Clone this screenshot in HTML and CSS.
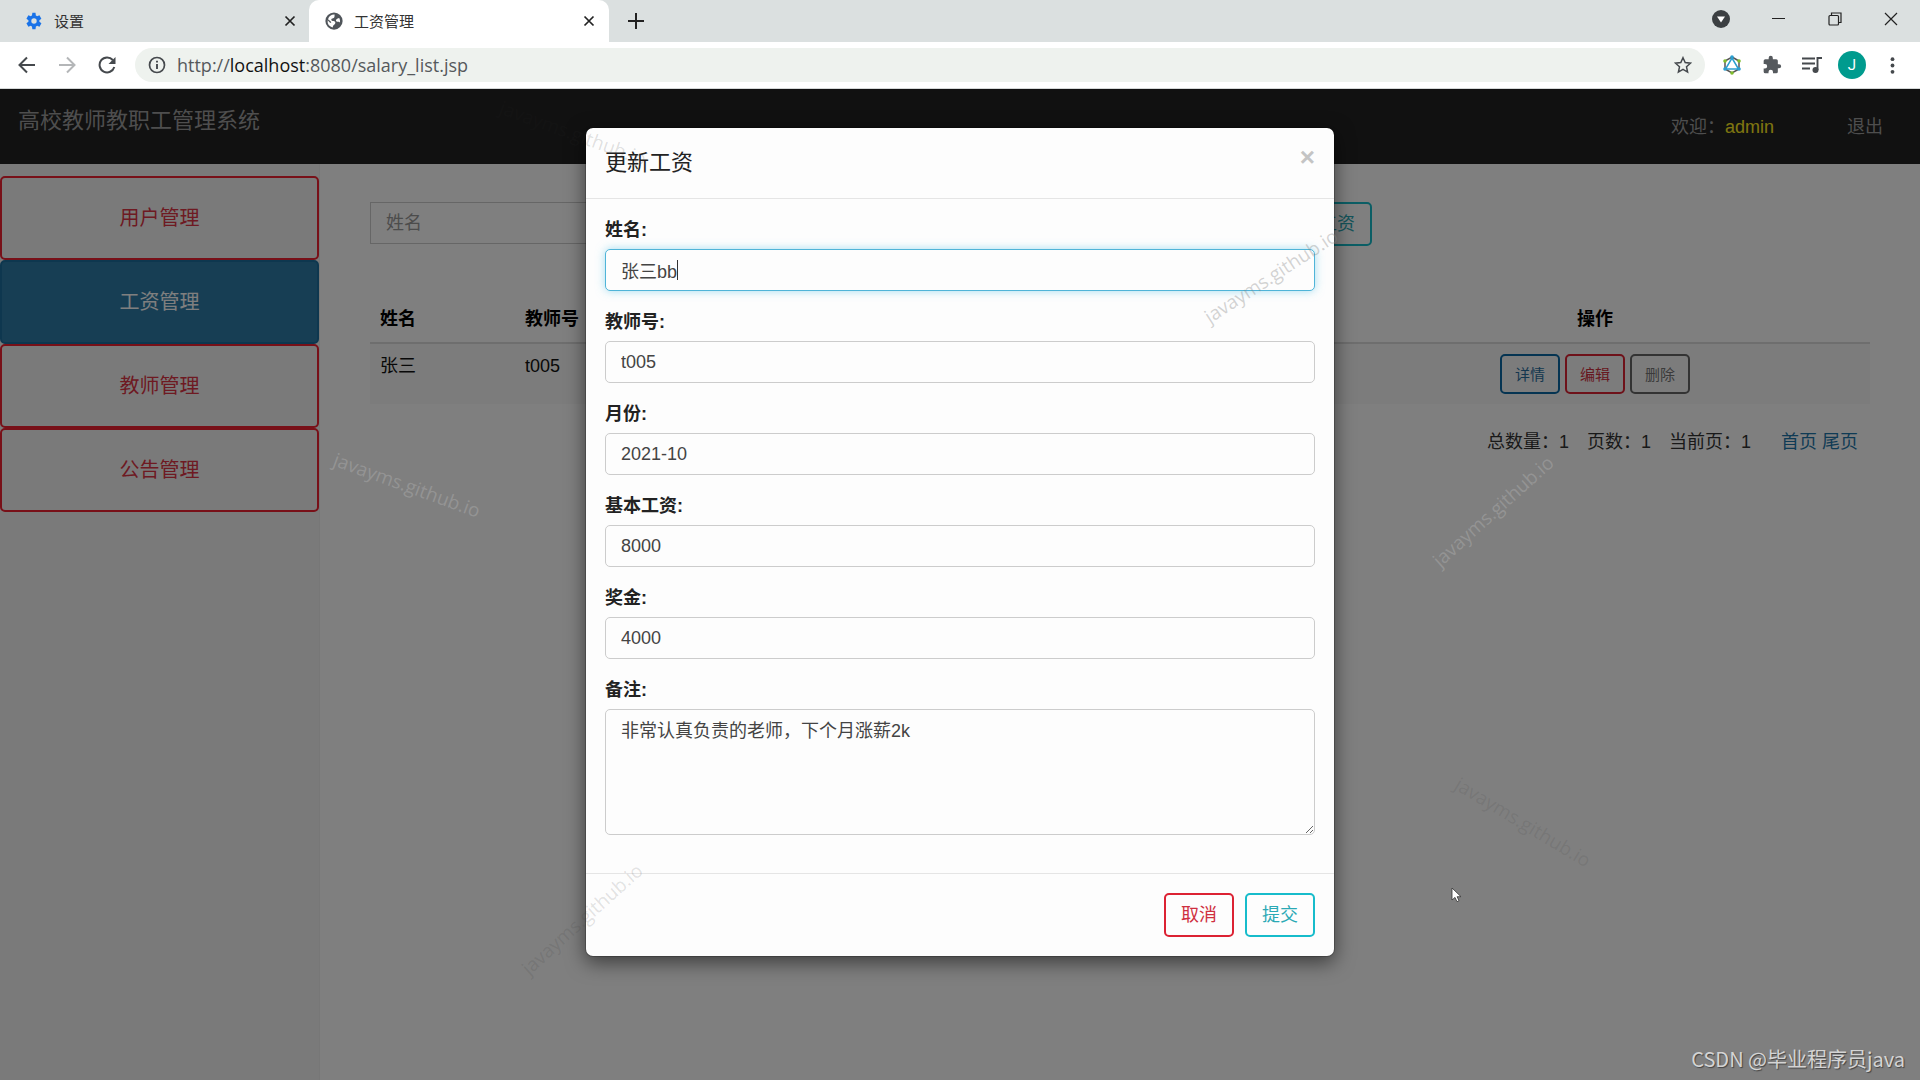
FILE: index.html
```html
<!DOCTYPE html>
<html lang="zh-CN">
<head>
<meta charset="utf-8">
<title>工资管理</title>
<link rel="stylesheet" href="styles.css">
</head>
<body>
<div class="browser">
  <header class="tabstrip">
    <div class="tab">
      <svg class="tab-icon" viewBox="0 0 24 24" fill="#1a73e8"><path d="M19.14 12.94a7.5 7.5 0 0 0 0-1.88l2.7-2.1-2.6-4.5-3.2 1.3a7 7 0 0 0-1.6-.94L14 1H9.800l-.5 3.800a7 7 0 0 0-1.600.94l-3.200-1.300-2.600 4.500 2.700 2.100a7.500 7.500 0 0 0 0 1.900l-2.700 2.100 2.600 4.500 3.200-1.300a7 7 0 0 0 1.600.94l.5 3.800H14l.5-3.800a7 7 0 0 0 1.600-.94l3.200 1.300 2.600-4.500zM12 15.600A3.600 3.600 0 1 1 12 8.400a3.600 3.600 0 0 1 0 7.200z"/></svg>
      <span class="tab-title">设置</span>
      <button class="tab-close" aria-label="关闭"><svg viewBox="0 0 12 12"><path d="M1.500 1.500l9 9m0-9l-9 9" stroke="#222" stroke-width="1.700"/></svg></button>
    </div>
    <div class="tab tab-active">
      <svg class="tab-icon" viewBox="0 0 24 24"><circle cx="12" cy="12" r="11.500" fill="#50555a"/><path d="M13 3.500c-1 2 .5 2.500-1 4S8 8 8.500 10.500s4 .500 5 2.500-.500 3.500-2 4.500-.500 2.500-1.500 3A9 9 0 0 1 3.500 11L7 14.500l1.500-1L7 12l-3-2.500A9 9 0 0 1 13 3.500zM15 10c1.500-.500 2-2 4-2a9 9 0 0 1 1 6c-1.500-1-2-1-3.500-1S14 11 15 10z" fill="#fff"/></svg>
      <span class="tab-title">工资管理</span>
      <button class="tab-close" aria-label="关闭"><svg viewBox="0 0 12 12"><path d="M1.500 1.500l9 9m0-9l-9 9" stroke="#222" stroke-width="1.700"/></svg></button>
    </div>
    <button class="new-tab" aria-label="新标签页"><svg viewBox="0 0 16 16"><path d="M8 0v16M0 8h16" stroke="#222" stroke-width="2"/></svg></button>
    <div class="window-controls">
      <button aria-label="搜索标签页"><svg width="18" height="18" viewBox="0 0 18 18"><circle cx="9" cy="9" r="9" fill="#3c4043"/><path d="M5 6.500h8L9 12.500z" fill="#fff"/></svg></button>
      <button aria-label="最小化"><svg width="14" height="14" viewBox="0 0 14 14"><path d="M0 6.500h13" stroke="#222"/></svg></button>
      <button aria-label="还原"><svg width="14" height="14" viewBox="0 0 14 14" fill="none" stroke="#222" stroke-width="1.200"><rect x="1" y="3.500" width="9.500" height="9.500" rx="1"/><path d="M3.500 3.500V1H13v9.500h-2.500"/></svg></button>
      <button aria-label="关闭窗口"><svg width="14" height="14" viewBox="0 0 14 14"><path d="M1 1l12 12m0-12L1 13" stroke="#222" stroke-width="1.200"/></svg></button>
    </div>
  </header>

  <div class="toolbar">
    <div class="nav-buttons">
      <button class="nav-button" aria-label="后退"><svg width="18" height="18" viewBox="0 0 18 18" fill="none" stroke="#45494d" stroke-width="2"><path d="M17 9H2m7-7.500L1.500 9 9 16.500"/></svg></button>
      <button class="nav-button" aria-label="前进"><svg width="18" height="18" viewBox="0 0 18 18" fill="none" stroke="#b4b6b8" stroke-width="2"><path d="M1 9h15M9 1.500L16.500 9 9 16.500"/></svg></button>
      <button class="nav-button" aria-label="重新加载"><svg width="18" height="18" viewBox="0 0 18 18" fill="none" stroke="#45494d" stroke-width="2"><path d="M14.800 4A7.500 7.500 0 1 0 16.300 11"/><path d="M17.500 1v7h-7z" fill="#45494d" stroke="none"/></svg></button>
    </div>
    <div class="omnibox">
      <svg width="18" height="18" viewBox="0 0 18 18" fill="none" stroke="#45494d"><circle cx="9" cy="9" r="7.500" stroke-width="1.700"/><path d="M9 8v5M9 4.700v1.800" stroke-width="1.900"/></svg>
      <span class="url">http://<span class="host">localhost</span>:8080/salary_list.jsp</span>
      <svg width="18" height="18" viewBox="0 0 18 18" fill="none" stroke="#45494d" stroke-width="1.500"><path d="M9 1.700l2.200 4.900 5.300.6-4 3.600 1.100 5.300L9 13.400l-4.600 2.700 1.100-5.300-4-3.600 5.300-.6z"/></svg>
    </div>
    <div class="extensions">
      <svg width="20" height="20" viewBox="0 0 20 20" fill="none"><path d="M10 2l7 4v8l-7 4-7-4V6z" stroke="#555" stroke-width="1.500"/><path d="M10 3l6.500 11h-13z" stroke="#2a9fd0" stroke-width="1.500" fill="#fff"/><g fill="#2a9fd0"><circle cx="10" cy="2" r="1.800"/><circle cx="3" cy="14" r="1.800"/><circle cx="17" cy="14" r="1.800"/></g><g fill="#7fbc2c"><circle cx="3" cy="6" r="1.800"/><circle cx="17" cy="6" r="1.800"/><circle cx="10" cy="18" r="1.800"/></g></svg>
      <svg width="20" height="20" viewBox="0 0 24 24" fill="#55595d"><path d="M20.500 11H19V7a2 2 0 0 0-2-2h-4V3.500a2.500 2.500 0 0 0-5 0V5H4a2 2 0 0 0-2 2v3.800h1.500a2.700 2.700 0 0 1 0 5.400H2V20a2 2 0 0 0 2 2h3.800v-1.500a2.700 2.700 0 0 1 5.400 0V22H17a2 2 0 0 0 2-2v-4h1.500a2.500 2.500 0 0 0 0-5z"/></svg>
      <svg width="20" height="18" viewBox="0 0 20 18" fill="none" stroke="#45494d" stroke-width="1.900"><path d="M0 2.500h13M0 7.500h13M0 12.500h8M15.500 14V2h4.500"/><circle cx="13.500" cy="14" r="3" fill="#45494d" stroke="none"/></svg>
      <span class="avatar">J</span>
      <svg width="5" height="17" viewBox="0 0 5 17" fill="#45494d"><circle cx="2.500" cy="2.200" r="1.900"/><circle cx="2.500" cy="8.500" r="1.900"/><circle cx="2.500" cy="14.800" r="1.900"/></svg>
    </div>
  </div>

  <div class="viewport">
    <nav class="navbar">
      <a class="brand" href="#">高校教师教职工管理系统</a>
      <div class="account">
        <span>欢迎：<a class="user" href="#">admin</a></span>
        <a class="logout" href="#">退出</a>
      </div>
    </nav>
    <div class="layout">
      <aside class="sidebar">
        <button class="menu-button">用户管理</button>
        <button class="menu-button menu-current">工资管理</button>
        <button class="menu-button">教师管理</button>
        <button class="menu-button">公告管理</button>
      </aside>
      <main class="content">
        <div class="search">
          <input class="control search-input" type="text" placeholder="姓名" aria-label="姓名">
          <button class="btn btn-info">添加工资</button>
        </div>
        <table class="table">
          <colgroup><col class="col-name"><col><col class="col-actions"><col class="col-rest"></colgroup>
          <thead>
            <tr><th>姓名</th><th>教师号</th><th class="centered">操作</th><th></th></tr>
          </thead>
          <tbody>
            <tr>
              <td>张三</td><td>t005</td>
              <td><div class="actions"><button class="btn btn-small btn-primary">详情</button><button class="btn btn-small btn-danger">编辑</button><button class="btn btn-small btn-dark">删除</button></div></td>
              <td></td>
            </tr>
          </tbody>
        </table>
        <div class="pager">
          <span>总数量：1</span><span>页数：1</span><span>当前页：1</span>
          <span class="pager-links"><a href="#">首页</a> <a href="#">尾页</a></span>
        </div>
      </main>
    </div>

    <div class="backdrop">
      <form class="modal" role="dialog" aria-labelledby="modal-title">
        <div class="modal-header">
          <h4 class="modal-title" id="modal-title">更新工资</h4>
          <button class="modal-close" type="button" aria-label="关闭">×</button>
        </div>
        <div class="modal-body">
          <div class="field"><label for="name">姓名:</label><input class="control" id="name" type="text" value="张三bb" autofocus></div>
          <div class="field"><label for="number">教师号:</label><input class="control" id="number" type="text" value="t005"></div>
          <div class="field"><label for="month">月份:</label><input class="control" id="month" type="text" value="2021-10"></div>
          <div class="field"><label for="base">基本工资:</label><input class="control" id="base" type="text" value="8000"></div>
          <div class="field"><label for="bonus">奖金:</label><input class="control" id="bonus" type="text" value="4000"></div>
          <div class="field"><label for="note">备注:</label><textarea class="control" id="note">非常认真负责的老师，下个月涨薪2k</textarea></div>
        </div>
        <div class="modal-footer">
          <button class="btn btn-danger" type="button">取消</button>
          <button class="btn btn-info" type="submit">提交</button>
        </div>
      </form>
    </div>
  </div>

  <span class="mark mark-header">javayms.github.io</span>
  <span class="mark mark-left">javayms.github.io</span>
  <span class="mark mark-field">javayms.github.io</span>
  <span class="mark mark-right">javayms.github.io</span>
  <span class="mark mark-bottom">javayms.github.io</span>
  <span class="mark mark-faint">javayms.github.io</span>
  <span class="credit">CSDN @毕业程序员java</span>
  <svg class="pointer" width="12" height="16" viewBox="0 0 12 16"><path d="M1 1v12l3-2.600 2 4.300 2-1-1.900-4H10z" fill="#fff" stroke="#333" stroke-width=".8"/></svg>
</div>
</body>
</html>
```
FILE: styles.css
```css
* { box-sizing: border-box; }

body {
  margin: 0;
  font: 18px/25px "Liberation Sans", "Noto Sans CJK SC", sans-serif;
  color: #333;
}

button {
  font: inherit;
  border: 0;
  padding: 0;
  background: none;
  white-space: nowrap;
}

a { text-decoration: none; }

.browser {
  position: relative;
  min-height: 100vh;
  display: flex;
  flex-direction: column;
  overflow: hidden;
}

/* Tab strip */
.tabstrip {
  display: flex;
  height: 42px;
  background: #dbe0e0;
}

.tab {
  display: flex;
  align-items: center;
  gap: 11px;
  width: 300px;
  padding: 0 14px 0 16px;
  font: 15px/20px "Noto Sans CJK SC", sans-serif;
  color: #333;
}

.tab:first-child { margin-left: 9px; padding-right: 13px; }
.tab-active { background: #fff; border-radius: 10px 10px 0 0; }
.tab-icon { width: 18px; height: 18px; }
.tab-title { flex: 1; }
.tab-close { display: flex; width: 12px; }
.new-tab { display: flex; align-items: center; width: 16px; margin-left: 19px; }
.tab-close svg, .new-tab svg { width: 100%; }

.window-controls {
  display: flex;
  align-items: center;
  gap: 42px;
  height: 38px;
  margin-left: auto;
  padding-right: 22px;
}

.window-controls button { display: flex; }

/* Toolbar */
.toolbar {
  display: flex;
  align-items: center;
  height: 47px;
  padding: 0 8px 0 18px;
  background: #fff;
  border-bottom: 1px solid #d5d8d8;
}

.nav-buttons { display: flex; gap: 22px; margin-right: 19px; }
.nav-button { display: flex; }

.omnibox {
  flex: 1;
  display: flex;
  align-items: center;
  gap: 11px;
  height: 34px;
  padding: 0 13px;
  border-radius: 17px;
  background: #eef2ee;
}

.url {
  flex: 1;
  font: 18px/24px "Open Sans", sans-serif;
  color: #55595c;
}

.host { color: #111; }

.extensions {
  display: grid;
  grid-template-columns: repeat(5, 40px);
  place-items: center;
  margin-left: 7px;
}

.avatar {
  width: 28px;
  height: 28px;
  border-radius: 50%;
  background: #009b8e;
  color: #fff;
  font: 15px/28px Roboto, sans-serif;
  text-align: center;
}

/* Page */
.viewport {
  position: relative;
  flex: 1;
  display: flex;
  flex-direction: column;
  background: #fff;
}

.navbar {
  display: flex;
  align-items: center;
  justify-content: space-between;
  height: 75px;
  padding: 0 37px 0 18px;
  background: #222;
  color: #9d9d9d;
}

.brand { font-size: 22px; color: #9d9d9d; padding-bottom: 12px; }
.account { display: flex; gap: 73px; padding-top: 2px; }
.user { color: #ffec20; }
.logout { color: #9d9d9d; }

.layout { flex: 1; display: flex; }

.sidebar {
  display: flex;
  flex-direction: column;
  width: 320px;
  padding-top: 12px;
  background: #f5f5f5;
  border-right: 1px solid #eee;
}

.menu-button {
  height: 84px;
  border: 2px solid #f02030;
  border-radius: 5px;
  font-size: 20px;
  color: #dc3545;
}

.menu-current { background: #2e7ca8; border-color: #1d6e9e; color: #fff; }

.content { flex: 1; padding: 38px 50px; }

.control {
  display: block;
  width: 100%;
  height: 42px;
  padding: 7px 15px;
  border: 1px solid #ccc;
  border-radius: 5px;
  background: #fff;
  color: #444;
  font: inherit;
  outline: 0;
}

.control::placeholder { color: #999; opacity: 1; }

.search {
  display: flex;
  justify-content: space-between;
  width: 1002px;
}

.search-input { width: 820px; border-radius: 0; }

.table {
  width: 100%;
  margin-top: 50px;
  border-collapse: collapse;
  table-layout: fixed;
  color: #111;
}

.table th, .table td { padding: 10px; text-align: left; vertical-align: top; }
.table th { padding-top: 11px; color: #000; border-bottom: 2px solid #ddd; }
.table td { background: #f9f9f9; }
.table .centered { text-align: center; }
.col-name { width: 145px; }
.col-actions { width: 210px; }
.col-rest { width: 170px; }
.actions { display: flex; gap: 5px; }

.btn {
  height: 44px;
  padding: 0 15px;
  border: 2px solid;
  border-radius: 5px;
}

.btn-small { width: 60px; height: 40px; padding: 0; font-size: 15px; }
.btn-danger { border-color: #dc2233; color: #cf3040; }
.btn-info { border-color: #17bccb; color: #2ba9b5; }
.btn-primary { border-color: #0a68a4; color: #2b6f9f; }
.btn-dark { border-color: #666; color: #777; }

.pager {
  display: flex;
  justify-content: flex-end;
  gap: 18px;
  margin-top: 26px;
  padding-right: 12px;
}

.pager-links { margin-left: 12px; }
.pager-links a { color: #1f77aa; }

/* Dialog */
.backdrop {
  position: absolute;
  inset: 0;
  padding-top: 38px;
  background: rgba(0, 0, 0, .5);
}

.modal {
  width: 750px;
  margin: 0 auto;
  border: 1px solid rgba(0, 0, 0, .2);
  border-radius: 8px;
  background: #fdfdfd;
  background-clip: padding-box;
  box-shadow: 0 6px 19px rgba(0, 0, 0, .5);
}

.modal-header {
  display: flex;
  justify-content: space-between;
  height: 71px;
  padding: 19px;
  border-bottom: 1px solid #e5e5e5;
}

.modal-title { margin: 0; font-size: 22px; line-height: 31px; font-weight: 400; color: #222; }
.modal-close { height: 20px; font-size: 26px; line-height: 20px; font-weight: 700; color: #c4c4c4; }
.modal-body { display: flex; flex-direction: column; gap: 19px; padding: 19px 19px 38px; }
.field label { display: block; margin-bottom: 6px; font-weight: 700; color: #222; }
.modal .control { background-color: #fdfdfd; }

.modal .control:focus {
  border-color: #4fb4d8;
  box-shadow: 0 0 10px rgba(102, 200, 233, .6);
  caret-color: transparent;
  background-image: linear-gradient(#333, #333);
  background-position: 71px center;
  background-size: 1px 20px;
  background-repeat: no-repeat;
}

textarea.control { height: 126px; padding-top: 9px; resize: vertical; }

.modal-footer {
  display: flex;
  justify-content: flex-end;
  gap: 11px;
  padding: 19px;
  border-top: 1px solid #e5e5e5;
}

.modal-footer .btn { width: 70px; }

/* Watermarks */
.mark {
  position: absolute;
  font: 19px/24px "Open Sans", sans-serif;
  white-space: nowrap;
  pointer-events: none;
}

.mark-header { left: 573px; top: 133px; transform: translate(-50%, -50%) rotate(20deg); color: rgba(40, 40, 40, .15); }
.mark-left { left: 407px; top: 485px; transform: translate(-50%, -50%) rotate(20deg); color: rgba(200, 200, 200, .3); }
.mark-field { left: 1271px; top: 276px; transform: translate(-50%, -50%) rotate(-33deg); color: rgba(130, 130, 130, .35); }
.mark-right { left: 1493px; top: 511px; transform: translate(-50%, -50%) rotate(-42deg); color: rgba(200, 200, 200, .3); }
.mark-bottom { left: 582px; top: 919px; transform: translate(-50%, -50%) rotate(-42deg); color: rgba(60, 60, 60, .15); }
.mark-faint { left: 1523px; top: 822px; transform: translate(-50%, -50%) rotate(31deg); color: rgba(70, 70, 70, .15); }

.credit {
  position: absolute;
  right: 15px;
  bottom: 8px;
  font: 20px/26px "Noto Sans CJK SC", sans-serif;
  color: #d4d4d4;
  text-shadow: 1px 1px 1px #444;
}

.pointer { position: absolute; left: 1451px; top: 887px; }
```
